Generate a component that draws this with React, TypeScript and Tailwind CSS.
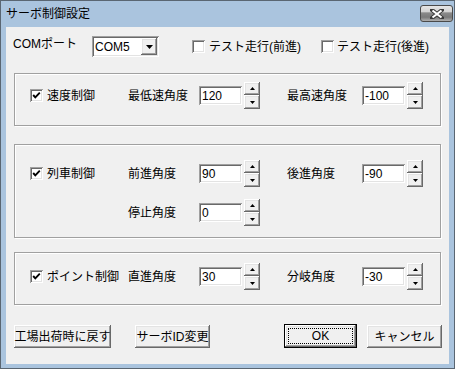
import React from "react";

const raised =
  "bg-[#f0f0f0] shadow-[inset_-1px_-1px_0_#696969,inset_1px_1px_0_#ffffff,inset_-2px_-2px_0_#a0a0a0,inset_2px_2px_0_#e3e3e3]";
const sunken =
  "bg-white shadow-[inset_1px_1px_0_#a0a0a0,inset_-1px_-1px_0_#ffffff,inset_2px_2px_0_#696969,inset_-2px_-2px_0_#e3e3e3]";

function UpArrow() {
  return (
    <svg width="5" height="3" viewBox="0 0 5 3">
      <polygon points="2.5,0 5,3 0,3" fill="#000" />
    </svg>
  );
}
function DownArrow({ w = 5, h = 3 }: { w?: number; h?: number }) {
  return (
    <svg width={w} height={h} viewBox={`0 0 ${w} ${h}`}>
      <polygon points={`0,0 ${w},0 ${w / 2},${h}`} fill="#000" />
    </svg>
  );
}

function Spinner() {
  return (
    <div className="flex flex-col w-[16px] h-[27px] shrink-0">
      <div className={raised + " h-[13px] flex items-center justify-center"}>
        <UpArrow />
      </div>
      <div className={raised + " h-[14px] flex items-center justify-center"}>
        <DownArrow />
      </div>
    </div>
  );
}

function CheckBox({ checked }: { checked?: boolean }) {
  return (
    <div className={sunken + " w-[13px] h-[13px] shrink-0 flex items-center justify-center"}>
      {checked && (
        <svg width="13" height="13" viewBox="0 0 13 13">
          <polyline points="3.2,6 5.3,8.3 9.8,3.6" fill="none" stroke="#000" strokeWidth="1.9" />
        </svg>
      )}
    </div>
  );
}

function NumField({ value }: { value: string }) {
  return (
    <div className={sunken + " w-[43px] h-[19px] shrink-0 flex items-center pl-[3px] text-[12px] leading-none"}>
      {value}
    </div>
  );
}

function Row({
  check,
  l1,
  v1,
  l2,
  v2,
}: {
  check?: string;
  l1: string;
  v1: string;
  l2?: string;
  v2?: string;
}) {
  return (
    <div className="flex items-center h-[27px]">
      <div className="w-[113px] pl-[15px] flex items-center gap-[4px] shrink-0">
        {check && (
          <>
            <CheckBox checked />
            <span className="whitespace-nowrap">{check}</span>
          </>
        )}
      </div>
      <div className="w-[71px] shrink-0 whitespace-nowrap">{l1}</div>
      <NumField value={v1} />
      <div className="ml-[2px]">
        <Spinner />
      </div>
      {l2 && (
        <>
          <div className="ml-[27px] w-[75px] shrink-0 whitespace-nowrap">{l2}</div>
          <NumField value={v2 || ""} />
          <div className="ml-[2px]">
            <Spinner />
          </div>
        </>
      )}
    </div>
  );
}

function Group({ className, children }: { className: string; children: React.ReactNode }) {
  return (
    <div
      className={
        "ml-[8px] w-[427px] border border-[#a0a0a0] shadow-[1px_1px_0_#ffffff,inset_1px_1px_0_#ffffff] flex flex-col " +
        className
      }
    >
      {children}
    </div>
  );
}

function Button({ children, className }: { children: React.ReactNode; className: string }) {
  return (
    <div className={raised + " h-[23px] flex items-center justify-center whitespace-nowrap " + className}>
      {children}
    </div>
  );
}

export default function App() {
  return (
    <div className="w-[455px] h-[369px] bg-[#aac4de] border border-[#5a6672] flex flex-col text-[12px] leading-[14px] text-black font-['Liberation_Sans','Noto_Sans_CJK_JP',sans-serif] overflow-hidden">
      {/* title bar */}
      <div className="h-[26px] flex items-start shrink-0">
        <div className="pl-[5px] pt-[6px] text-[12px] leading-[14px] text-black">サーボ制御設定</div>
        <div className="ml-auto mt-[4px] mr-[1px] w-[33px] h-[17px] rounded-[3px] border border-[#4a4a4a] bg-[linear-gradient(to_bottom,#e6e6e6_0%,#d2d2d2_40%,#8a8a8a_45%,#7a7a7a_75%,#b0b0b0_100%)] flex items-center justify-center">
          <svg width="14" height="10" viewBox="0 0 14 10">
            <path d="M2 1 L12 9 M12 1 L2 9" stroke="#3a3a3a" strokeWidth="4" strokeLinecap="square" />
            <path d="M2.5 1.5 L11.5 8.5 M11.5 1.5 L2.5 8.5" stroke="#ffffff" strokeWidth="2.2" />
          </svg>
        </div>
      </div>

      {/* client area */}
      <div className="mx-[5px] mb-[4px] flex-1 bg-[#f0f0f0] flex flex-col">
        {/* COM row */}
        <div className="mt-[9px] h-[21px] flex items-center">
          <div className="ml-[7px] w-[79px] mb-[5px] whitespace-nowrap">COMポート</div>
          <div className={sunken + " w-[67px] h-[21px] flex items-center justify-between pl-[3px] pr-[2px]"}>
            <span className="leading-none">COM5</span>
            <div className={raised + " w-[16px] h-[17px] flex items-center justify-center"}>
              <DownArrow w={7} h={4} />
            </div>
          </div>
          <div className="ml-[33px] w-[129px] flex items-center gap-[4px]">
            <CheckBox />
            <span className="whitespace-nowrap">テスト走行(前進)</span>
          </div>
          <div className="flex items-center gap-[3px]">
            <CheckBox />
            <span className="whitespace-nowrap">テスト走行(後進)</span>
          </div>
        </div>

        <Group className="mt-[16px] h-[53px] pt-[8px]">
          <Row check="速度制御" l1="最低速角度" v1="120" l2="最高速角度" v2="-100" />
        </Group>

        <Group className="mt-[18px] h-[94px] pt-[15px] gap-[12px]">
          <Row check="列車制御" l1="前進角度" v1="90" l2="後進角度" v2="-90" />
          <Row l1="停止角度" v1="0" />
        </Group>

        <Group className="mt-[14px] h-[53px] pt-[10px]">
          <Row check="ポイント制御" l1="直進角度" v1="30" l2="分岐角度" v2="-30" />
        </Group>

        {/* buttons */}
        <div className="mt-[19px] h-[24px] flex items-end">
          <Button className="ml-[8px] w-[97px]">工場出荷時に戻す</Button>
          <Button className="ml-[24px] w-[75px]">サーボID変更</Button>
          <div className="ml-[74px] w-[73px] h-[24px] border border-black">
            <div className={raised + " w-full h-full p-[3px]"}>
              <div className="w-full h-full border border-dotted border-black flex items-center justify-center">
                OK
              </div>
            </div>
          </div>
          <Button className="ml-[10px] w-[75px]">キャンセル</Button>
        </div>
      </div>
    </div>
  );
}
